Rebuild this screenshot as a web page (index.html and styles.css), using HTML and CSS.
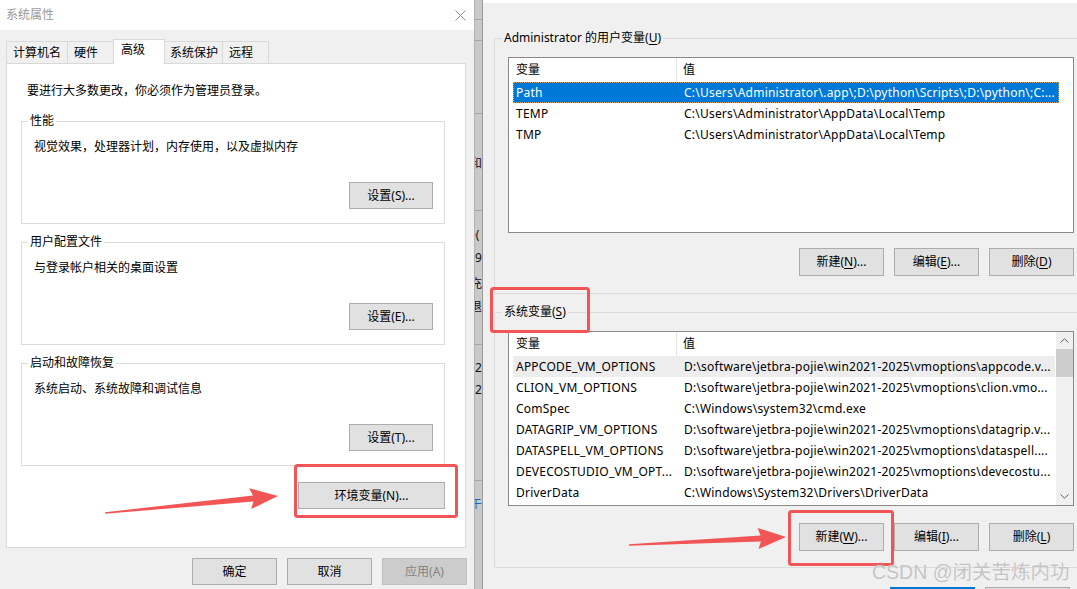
FILE: index.html
```html
<!DOCTYPE html>
<html lang="zh-CN">
<head>
<meta charset="utf-8">
<title>系统属性 - 环境变量</title>
<link rel="stylesheet" href="styles.css">
</head>
<body>
<div class="screen">
  <section class="sysprops">
    <div class="titlebar">
      <span class="title">系统属性</span>
      <svg class="close" viewBox="0 0 11 11"><path d="M0.5 0.5L10.5 10.5M10.5 0.5L0.5 10.5" stroke="#8a8a8a" stroke-width="1" fill="none"/></svg>
    </div>
    <div class="tabs">
      <div class="tab t1">计算机名</div>
      <div class="tab t2">硬件</div>
      <div class="tab t3 active">高级</div>
      <div class="tab t4">系统保护</div>
      <div class="tab t5">远程</div>
    </div>
    <div class="panel">
      <p class="intro">要进行大多数更改，你必须作为管理员登录。</p>
      <fieldset class="group">
        <legend>性能</legend>
        <p class="desc">视觉效果，处理器计划，内存使用，以及虚拟内存</p>
        <div class="actions"><button class="btn btn-set">设置(S)...</button></div>
      </fieldset>
      <fieldset class="group">
        <legend>用户配置文件</legend>
        <p class="desc">与登录帐户相关的桌面设置</p>
        <div class="actions"><button class="btn btn-set">设置(E)...</button></div>
      </fieldset>
      <fieldset class="group">
        <legend>启动和故障恢复</legend>
        <p class="desc">系统启动、系统故障和调试信息</p>
        <div class="actions"><button class="btn btn-set">设置(T)...</button></div>
      </fieldset>
      <div class="env-row"><button class="btn btn-env">环境变量(N)...</button></div>
    </div>
    <div class="footer">
      <button class="btn btn-foot">确定</button>
      <button class="btn btn-foot">取消</button>
      <button class="btn btn-foot disabled">应用(A)</button>
    </div>
  </section>

  <div class="strip">
    <span class="hl l1"></span><span class="hl l2"></span><span class="hl l3"></span>
    <span class="hl l4"></span><span class="hl l5"></span><span class="hl l6"></span>
    <span class="g g1">和</span><span class="g g2">e(</span><span class="g g3">9</span>
    <span class="g g4">充</span><span class="g g5">退</span><span class="g g6">2</span>
    <span class="g g7">2</span><span class="g g8">午</span>
  </div>

  <section class="envvars">
    <fieldset class="vgroup user">
      <legend>Administrator 的用户变量(<u>U</u>)</legend>
      <div class="listview">
        <div class="lv-body">
          <div class="lv-head"><span>变量</span><span>值</span></div>
          <div class="lv-row sel"><span>Path</span><span>C:\Users\Administrator\.app\;D:\python\Scripts\;D:\python\;C:...</span></div>
          <div class="lv-row"><span>TEMP</span><span>C:\Users\Administrator\AppData\Local\Temp</span></div>
          <div class="lv-row"><span>TMP</span><span>C:\Users\Administrator\AppData\Local\Temp</span></div>
        </div>
      </div>
      <div class="vbuttons">
        <button class="btn btn-v">新建(<u>N</u>)...</button>
        <button class="btn btn-v">编辑(<u>E</u>)...</button>
        <button class="btn btn-v">删除(<u>D</u>)</button>
      </div>
    </fieldset>

    <fieldset class="vgroup sys">
      <legend>系统变量(<u>S</u>)</legend>
      <div class="listview">
        <div class="lv-body">
          <div class="lv-head"><span>变量</span><span>值</span></div>
          <div class="lv-row hot"><span>APPCODE_VM_OPTIONS</span><span>D:\software\jetbra-pojie\win2021-2025\vmoptions\appcode.v...</span></div>
          <div class="lv-row"><span>CLION_VM_OPTIONS</span><span>D:\software\jetbra-pojie\win2021-2025\vmoptions\clion.vmo...</span></div>
          <div class="lv-row"><span>ComSpec</span><span>C:\Windows\system32\cmd.exe</span></div>
          <div class="lv-row"><span>DATAGRIP_VM_OPTIONS</span><span>D:\software\jetbra-pojie\win2021-2025\vmoptions\datagrip.v...</span></div>
          <div class="lv-row"><span>DATASPELL_VM_OPTIONS</span><span>D:\software\jetbra-pojie\win2021-2025\vmoptions\dataspell....</span></div>
          <div class="lv-row"><span>DEVECOSTUDIO_VM_OPT...</span><span>D:\software\jetbra-pojie\win2021-2025\vmoptions\devecostu...</span></div>
          <div class="lv-row"><span>DriverData</span><span>C:\Windows\System32\Drivers\DriverData</span></div>
        </div>
        <div class="sb">
          <div class="sb-btn"><svg viewBox="0 0 9 5" width="9" height="5"><path d="M0.5 4.5L4.5 0.8L8.5 4.5" stroke="#606060" fill="none"/></svg></div>
          <div class="sb-thumb"></div>
          <div class="sb-track"></div>
          <div class="sb-btn"><svg viewBox="0 0 9 5" width="9" height="5"><path d="M0.5 0.5L4.5 4.2L8.5 0.5" stroke="#606060" fill="none"/></svg></div>
        </div>
      </div>
      <div class="vbuttons">
        <button class="btn btn-v">新建(<u>W</u>)...</button>
        <button class="btn btn-v">编辑(<u>I</u>)...</button>
        <button class="btn btn-v">删除(<u>L</u>)</button>
      </div>
    </fieldset>

    <div class="bottom">
      <button class="btn btn-v btn-ok">确定</button>
      <button class="btn btn-v">取消</button>
    </div>
  </section>

  <svg class="annot" viewBox="0 0 1077 589" width="1077" height="589">
    <rect x="295.5" y="465.5" width="161" height="51" rx="2" fill="none" stroke="#f25555" stroke-width="3"/>
    <rect x="491.5" y="288.5" width="97" height="43" rx="2" fill="none" stroke="#f25555" stroke-width="3"/>
    <rect x="789.5" y="511.5" width="103" height="53" rx="2" fill="none" stroke="#f25555" stroke-width="3"/>
    <polygon points="105,512.2 253,495.6 249.1,488.2 278,496 251.1,509.1 253.5,501.4 105.2,513.8" fill="#f25555"/>
    <polygon points="629,544.2 760.6,535.4 757.5,527.9 786,537 758.5,548.9 760.9,541.4 629,545.8" fill="#f25555"/>
  </svg>
  <div class="watermark">CSDN @闭关苦炼内功</div>
</div>
</body>
</html>
```

FILE: styles.css
```css
* { box-sizing: border-box; margin: 0; padding: 0; }
html, body { width: 1077px; height: 589px; overflow: hidden; }
body {
  font-family: "Noto Sans", "Noto Sans CJK SC", sans-serif;
  font-size: 12px;
  color: #000;
  background: #f0f0f0;
}
.screen { position: relative; display: flex; width: 1077px; height: 589px; overflow: hidden; }

/* ---------- left dialog ---------- */
.sysprops { width: 474px; flex: none; background: #f0f0f0; display: flex; flex-direction: column; }
.titlebar {
  height: 30px; background: #fff; display: flex; align-items: center;
  justify-content: space-between; padding: 0 8px 0 6px;
}
.title { color: #999; line-height: 16px; }
.close { width: 11px; height: 11px; display: block; }

.tabs { display: flex; align-items: flex-end; height: 24px; margin-top: 9px; padding-left: 6px; }
.tab {
  height: 22px; border: 1px solid #d9d9d9; border-bottom: none; background: #f0f0f0;
  padding-left: 6px; line-height: 21px; margin-left: -1px; white-space: nowrap;
}
.tab.t1 { margin-left: 0; width: 62px; }
.tab.t2 { width: 47px; }
.tab.t3 { width: 52px; }
.tab.t4 { width: 59px; padding-left: 5px; }
.tab.t5 { width: 47px; }
.tab.active {
  height: 25px; background: #fff; margin-bottom: -1px; position: relative; z-index: 1;
  padding-left: 7px; line-height: 20px;
}

.panel {
  margin: 0 8px 0 6px; height: 485px; background: #fff; border: 1px solid #d9d9d9;
  padding-top: 19px;
}
.intro { margin-left: 20px; line-height: 16px; }
.group {
  border: 1px solid #dcdcdc; margin: 14px 20px 0 14px; padding: 10px 11px 14px 6px; min-width: 0;
}
.group + .group { margin-top: 10px; }
.group legend { padding: 0 2px; line-height: 16px; }
.desc { margin-left: 6px; line-height: 16px; }
.actions { display: flex; justify-content: flex-end; margin-top: 27px; }

.btn {
  height: 27px; background: #e1e1e1; border: 1px solid #adadad; font: inherit; color: #000;
  line-height: 25px; padding: 0; text-align: center; white-space: nowrap;
}
.btn u { text-decoration: underline; text-underline-offset: 2px; }
.btn-set { width: 84px; }
.btn-env { width: 147px; }
.env-row { display: flex; justify-content: flex-end; margin: 16px 20px 0 0; }

.footer { display: flex; justify-content: flex-end; gap: 10px; margin-top: 10px; padding-right: 7px; }
.btn-foot { width: 85px; }
.btn.disabled { background: #cccccc; border-color: #bfbfbf; color: #838383; }

/* ---------- background window strip ---------- */
.strip {
  width: 9px; flex: none; position: relative; overflow: hidden;
  background: #c9c9c9; border-left: 1px solid #b2b2b2; border-right: 1px solid #9a9a9a;
}
.hl { position: absolute; left: 0; right: 0; height: 1px; background: #a6a6a6; }
.l1 { top: 19px; } .l2 { top: 40px; } .l3 { top: 113px; }
.l4 { top: 210px; } .l5 { top: 344px; } .l6 { top: 480px; }
.g { position: absolute; left: -5px; line-height: 14px; font-size: 12px; color: #111; white-space: nowrap; }
.g1 { top: 157px; } .g2 { top: 228px; left: -6px; } .g3 { top: 251px; left: 0; }
.g4 { top: 277px; } .g5 { top: 300px; } .g6 { top: 361px; left: 0; }
.g7 { top: 383px; left: 0; } .g8 { top: 497px; color: #1a64c8; }

/* ---------- right dialog ---------- */
.envvars {
  flex: 1; min-width: 0; background: #f0f0f0; border-top: 3px solid #fff;
  padding-left: 11px; overflow: hidden;
}
.vgroup { border: 1px solid #dcdcdc; margin-right: -40px; padding: 11px 0 17px 7px; min-width: 0; }
.vgroup.user { margin-top: 27px; }
.vgroup.sys { margin-top: 10px; padding-bottom: 16px; }
.vgroup legend { padding: 0 2px; line-height: 16px; white-space: nowrap; }
.vgroup legend u { text-underline-offset: 2px; }

.listview {
  width: 566px; margin-left: 6px; border: 1px solid #8a8a8a; background: #fff;
  display: flex; overflow: hidden;
}
.user .listview { height: 176px; }
.sys .listview { height: 175px; }
.lv-body { flex: 1; min-width: 0; padding-left: 4px; overflow: hidden; }
.user .lv-body { padding-right: 14px; }
.lv-head, .lv-row { display: grid; grid-template-columns: 164px 1fr; }
.lv-head { height: 24px; line-height: 23px; }
.lv-head span { padding-left: 3px; }
.lv-head span:first-child { border-right: 1px solid #e5e5e5; }
.lv-head span + span { padding-left: 6px; }
.lv-row { height: 21px; line-height: 21px; letter-spacing: 0.22px; }
.lv-row span { padding-left: 3px; white-space: nowrap; overflow: hidden; }
.lv-row span + span { padding-left: 7px; }
.lv-row.sel { background: #0078d7; color: #fff; outline: 1px dotted #d9a066; outline-offset: -1px; }
.lv-row.hot { background: #ededed; }

.sb { width: 17px; flex: none; margin-left: 1px; background: #f0f0f0; display: flex; flex-direction: column; }
.sb-btn { height: 17px; display: flex; align-items: center; justify-content: center; }
.sb-btn svg { display: block; }
.sb-thumb { height: 28px; background: #cdcdcd; }
.sb-track { flex: 1; }

.vbuttons { display: flex; justify-content: flex-end; gap: 10px; width: 566px; margin-left: 6px; }
.user .vbuttons { margin-top: 15px; }
.sys .vbuttons { margin-top: 17px; }
.btn-v { width: 85px; height: 28px; line-height: 26px; }

.bottom { display: flex; justify-content: flex-end; gap: 10px; margin-top: 19px; padding-right: 7px; }
.btn-ok { border: 2px solid #0078d7; }

/* ---------- overlays ---------- */
.annot { position: absolute; left: 0; top: 0; pointer-events: none; }
.watermark {
  position: absolute; left: 872px; top: 560px; font-family: "Liberation Sans", "Noto Sans CJK SC", sans-serif;
  font-size: 19.5px; line-height: 24px; color: #c4c4c4; white-space: nowrap;
  text-shadow: 0 0 1px rgba(255,255,255,0.8);
}
```
